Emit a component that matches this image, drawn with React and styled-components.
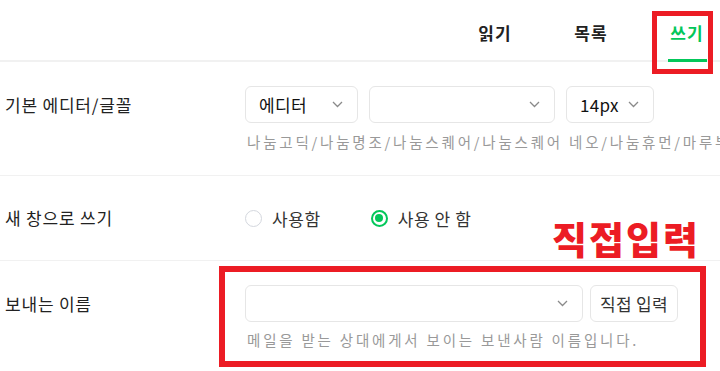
import styled, { createGlobalStyle } from "styled-components";

const GlobalStyle = createGlobalStyle`
  html, body {
    margin: 0;
    padding: 0;
    background: #fff;
    overflow: hidden;
  }
  body {
    font-family: "Noto Sans CJK KR", "Noto Sans", sans-serif;
    color: #222;
  }
`;

const colors = {
  text: "#222",
  green: "#03c75a",
  red: "#ec1c24",
  hint: "#999",
  border: "#e6e6e6",
  line: "#f1f1f1",
};

const Page = styled.div`
  position: relative;
  width: 720px;
  height: 371px;
  overflow: hidden;
`;

const Header = styled.div`
  display: flex;
  justify-content: flex-end;
  gap: 36px;
  height: 62px;
  padding-right: 3px;
  box-sizing: border-box;
  border-bottom: 2px solid ${colors.line};
`;

const Tab = styled.div`
  position: relative;
  width: 60px;
  display: flex;
  justify-content: center;
  align-items: center;
  padding-top: 4px;
  font-size: 17px;
  font-weight: 700;
  letter-spacing: 1px;
  color: ${(p) => (p.$active ? colors.green : colors.text)};
  &::after {
    content: "";
    display: ${(p) => (p.$active ? "block" : "none")};
    position: absolute;
    left: 11px;
    bottom: -2px;
    width: 39px;
    height: 3px;
    background: ${colors.green};
  }
`;

const TabMark = styled.div`
  position: absolute;
  left: -5px;
  top: 11px;
  width: 61px;
  height: 63px;
  box-sizing: border-box;
  border: 5px solid ${colors.red};
`;

const Row = styled.div`
  position: relative;
  display: flex;
  align-items: ${(p) => (p.$center ? "center" : "flex-start")};
  height: ${(p) => p.$height}px;
  padding: ${(p) => (p.$center ? "0" : "24px")} 0 0 5px;
  box-sizing: border-box;
  border-bottom: ${(p) => (p.$last ? "none" : `1px solid ${colors.line}`)};
`;

const Label = styled.div`
  width: 240px;
  flex-shrink: 0;
  font-size: 17px;
  letter-spacing: 0.8px;
  line-height: ${(p) => (p.$center ? "24px" : "37px")};
  color: ${colors.text};
`;

const Field = styled.div`
  display: flex;
  flex-direction: column;
  min-width: 0;
`;

const Controls = styled.div`
  display: flex;
  gap: ${(p) => p.$gap || 11}px;
`;

const SelectBox = styled.div`
  display: flex;
  align-items: center;
  justify-content: space-between;
  width: ${(p) => p.$width}px;
  height: 37px;
  padding: 0 14px 0 13px;
  box-sizing: border-box;
  border: 1px solid ${colors.border};
  border-radius: 6px;
  font-size: 17px;
  letter-spacing: 0.3px;
  color: #111;
`;

const Button = styled.div`
  display: flex;
  align-items: center;
  justify-content: center;
  width: 88px;
  height: 37px;
  box-sizing: border-box;
  border: 1px solid ${colors.border};
  border-radius: 6px;
  font-size: 17px;
  letter-spacing: 0.3px;
  color: #333;
`;

const Hint = styled.div`
  margin-top: ${(p) => p.$top || 9}px;
  padding-left: 2px;
  font-size: 14.5px;
  line-height: 20px;
  letter-spacing: 2.8px;
  color: ${colors.hint};
  white-space: nowrap;
`;

const RadioGroup = styled.div`
  display: flex;
  align-items: center;
  gap: 50px;
`;

const RadioItem = styled.label`
  display: flex;
  align-items: center;
  gap: 10px;
  font-size: 17px;
  letter-spacing: 0.6px;
  color: #333;
`;

const Circle = styled.span`
  position: relative;
  width: 17px;
  height: 17px;
  box-sizing: border-box;
  border-radius: 50%;
  border: ${(p) => (p.$on ? `2px solid ${colors.green}` : "1px solid #d4d7de")};
  &::after {
    content: "";
    display: ${(p) => (p.$on ? "block" : "none")};
    position: absolute;
    left: 2.5px;
    top: 2.5px;
    width: 8px;
    height: 8px;
    border-radius: 50%;
    background: ${colors.green};
  }
`;

const Annotation = styled.div`
  position: absolute;
  left: 552px;
  top: 215px;
  font-size: 38px;
  line-height: 46px;
  font-weight: 900;
  color: ${colors.red};
  letter-spacing: 2px;
`;

const FieldMark = styled.div`
  position: absolute;
  left: 219px;
  top: 5px;
  width: 487px;
  height: 101px;
  box-sizing: border-box;
  border: 6px solid ${colors.red};
`;

const Chevron = () => (
  <svg width="11" height="7" viewBox="0 0 11 7" fill="none">
    <path d="M1 1l4.5 4.5L10 1" stroke="#8a8a8a" strokeWidth="1.3" />
  </svg>
);

function App() {
  return (
    <Page>
      <GlobalStyle />
      <Header>
        <Tab>읽기</Tab>
        <Tab>목록</Tab>
        <Tab $active>
          쓰기
          <TabMark />
        </Tab>
      </Header>

      <Row $height={114}>
        <Label>기본 에디터/글꼴</Label>
        <Field>
          <Controls>
            <SelectBox $width={113}>
              에디터
              <Chevron />
            </SelectBox>
            <SelectBox $width={186}>
              <span />
              <Chevron />
            </SelectBox>
            <SelectBox $width={88}>
              14px
              <Chevron />
            </SelectBox>
          </Controls>
          <Hint>나눔고딕/나눔명조/나눔스퀘어/나눔스퀘어 네오/나눔휴먼/마루부리</Hint>
        </Field>
      </Row>

      <Row $center $height={85}>
        <Label $center>새 창으로 쓰기</Label>
        <RadioGroup>
          <RadioItem>
            <Circle />
            사용함
          </RadioItem>
          <RadioItem>
            <Circle $on />
            사용 안 함
          </RadioItem>
        </RadioGroup>
      </Row>

      <Row $last $height={110}>
        <Label>보내는 이름</Label>
        <Field>
          <Controls $gap={7}>
            <SelectBox $width={338}>
              <span />
              <Chevron />
            </SelectBox>
            <Button>직접 입력</Button>
          </Controls>
          <Hint $top={8}>메일을 받는 상대에게서 보이는 보낸사람 이름입니다.</Hint>
        </Field>
        <FieldMark />
      </Row>

      <Annotation>직접입력</Annotation>
    </Page>
  );
}

export default App;
